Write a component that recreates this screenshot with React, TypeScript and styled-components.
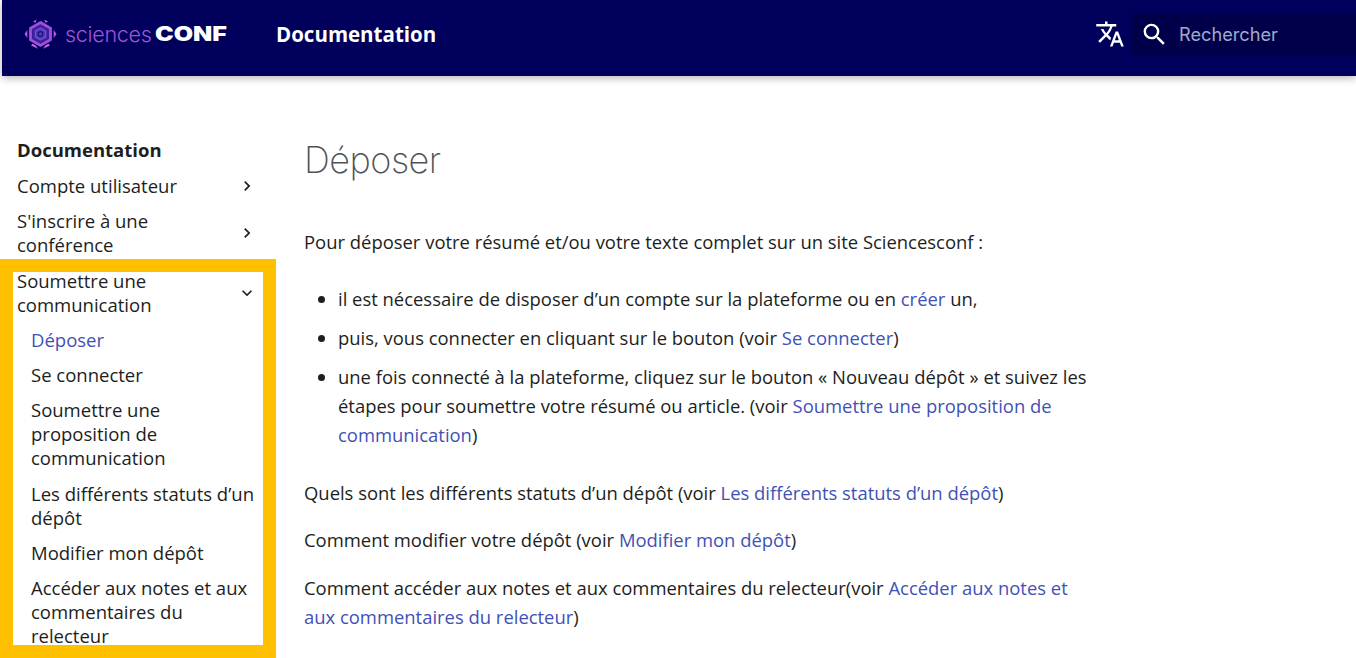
import styled, { createGlobalStyle } from "styled-components";
import { MdChevronRight, MdExpandMore, MdSearch, MdTranslate } from "react-icons/md";

const GlobalStyle = createGlobalStyle`
  html, body {
    margin: 0;
    background: #fff;
    overflow: hidden;
  }
  body {
    font-family: "Open Sans", "Liberation Sans", sans-serif;
    color: #1c1e21;
  }
`;

const subItems = [
  { label: "Déposer", active: true },
  { label: "Se connecter" },
  { label: "Soumettre une proposition de communication" },
  { label: "Les différents statuts d’un dépôt" },
  { label: "Modifier mon dépôt" },
  { label: "Accéder aux notes et aux commentaires du relecteur" },
];

const Logo = () => (
  <svg width="33" height="32" viewBox="0 0 33 32" fill="none">
    <path d="M16.500 4.500l10 5.750v11.500l-10 5.750-10-5.750v-11.500z" fill="#3a1f9a" stroke="#a04fd8" strokeWidth="2.800" />
    <path d="M16.500 10l5.200 3v6l-5.200 3-5.200-3v-6z" fill="#4b3cc0" stroke="#7a48d0" strokeWidth="1.400" />
    <circle cx="16.500" cy="16" r="2.400" stroke="#20106a" strokeWidth="1.200" />
    <path d="M9 3.800L12.500 1.500l-1 3.200zM24 3.800L20.500 1.500l1 3.200z" fill="#d060e0" />
    <path d="M7 27.500l7 3.200-2.500-3.400-3-1.600zM26 27.500l-7 3.200 2.500-3.400 3-1.600z" fill="#d060e0" />
    <path d="M3.300 12L0.500 16l2.800 4z" fill="#b45ce0" />
    <path d="M29.700 12L32.500 16l-2.800 4z" fill="#b45ce0" />
  </svg>
);

export default function App() {
  return (
    <Page>
      <GlobalStyle />
      <Header>
        <Brand>
          <Logo />
          <BrandLight>sciences</BrandLight>
          <BrandBold>CONF</BrandBold>
        </Brand>
        <HeaderTitle>Documentation</HeaderTitle>
        <HeaderRight>
          <MdTranslate size={30} color="#fff" />
          <SearchBox>
            <MdSearch size={29} color="#fff" />
            <SearchText>Rechercher</SearchText>
          </SearchBox>
        </HeaderRight>
      </Header>
      <Body>
        <Sidebar>
          <SideHeading>Documentation</SideHeading>
          <SideRow>
            <span>Compte utilisateur</span>
            <MdChevronRight size={20} />
          </SideRow>
          <SideRow>
            <span>S'inscrire à une conférence</span>
            <MdChevronRight size={20} />
          </SideRow>
          <SideRow>
            <span>Soumettre une communication</span>
            <MdExpandMore size={20} />
          </SideRow>
          <SubList>
            {subItems.map((item) => (
              <SubItem key={item.label} $active={item.active}>
                {item.label}
              </SubItem>
            ))}
          </SubList>
        </Sidebar>
        <Main>
          <Title>Déposer</Title>
          <Para>Pour déposer votre résumé et/ou votre texte complet sur un site Sciencesconf :</Para>
          <List>
            <li>
              il est nécessaire de disposer d’un compte sur la plateforme ou en <Link>créer</Link> un,
            </li>
            <li>
              puis, vous connecter en cliquant sur le bouton (voir <Link>Se connecter</Link>)
            </li>
            <li>
              une fois connecté à la plateforme, cliquez sur le bouton « Nouveau dépôt » et suivez les étapes pour
              soumettre votre résumé ou article. (voir <Link>Soumettre une proposition de communication</Link>)
            </li>
          </List>
          <Para>
            Quels sont les différents statuts d’un dépôt (voir <Link>Les différents statuts d’un dépôt</Link>)
          </Para>
          <Para>
            Comment modifier votre dépôt (voir <Link>Modifier mon dépôt</Link>)
          </Para>
          <Para>
            Comment accéder aux notes et aux commentaires du relecteur(voir{" "}
            <Link>Accéder aux notes et aux commentaires du relecteur</Link>)
          </Para>
        </Main>
      </Body>
      <Highlight />
    </Page>
  );
}

const Page = styled.div`
  position: relative;
  width: 1356px;
  height: 658px;
  overflow: hidden;
`;

const Header = styled.header`
  display: flex;
  align-items: center;
  height: 76px;
  margin-left: 2px;
  padding: 0 0 8px 22px;
  box-sizing: border-box;
  background: #00005c;
  box-shadow: 0 2px 8px rgba(0, 0, 0, 0.3);
`;

const Brand = styled.div`
  display: flex;
  align-items: center;
  width: 252px;
  flex-shrink: 0;
`;

const BrandLight = styled.span`
  margin-left: 8px;
  font-family: Inter, sans-serif;
  font-size: 21.500px;
  font-weight: 300;
  letter-spacing: -0.3px;
  color: #a055d8;
`;

const BrandBold = styled.span`
  display: inline-block;
  margin-left: 4px;
  font-family: Inter, sans-serif;
  font-size: 20px;
  font-weight: 900;
  color: #fff;
  transform: scaleX(1.25);
  transform-origin: left center;
`;

const HeaderTitle = styled.div`
  font-size: 20.500px;
  font-weight: 700;
  color: #fff;
`;

const HeaderRight = styled.div`
  display: flex;
  align-items: center;
  margin-left: auto;
  gap: 6px;
`;

const SearchBox = styled.div`
  display: flex;
  align-items: center;
  gap: 10px;
  width: 225px;
  height: 41px;
  padding-left: 9px;
  box-sizing: border-box;
  background: #00004a;
`;

const SearchText = styled.span`
  font-family: Inter, sans-serif;
  font-size: 18.200px;
  color: #a4a8c8;
`;

const Body = styled.div`
  display: flex;
`;

const Sidebar = styled.nav`
  width: 240px;
  flex-shrink: 0;
  margin: 62px 0 0 17px;
  font-size: 18.500px;
  line-height: 24px;
  color: #1c1e21;
`;

const SideHeading = styled.div`
  font-weight: 700;
  margin-bottom: 11.500px;
`;

const SideRow = styled.div`
  display: flex;
  align-items: center;
  justify-content: space-between;
  margin-bottom: 11.500px;

  span {
    max-width: 180px;
  }
`;

const SubList = styled.ul`
  list-style: none;
  margin: 0;
  padding: 0 0 0 14px;
`;

const SubItem = styled.li<{ $active?: boolean }>`
  margin-bottom: 11.200px;
  color: ${(p) => (p.$active ? "#3f51b5" : "#1c1e21")};
`;

const Main = styled.main`
  width: 790px;
  margin: 54px 0 0 47px;
  font-size: 18.430px;
  line-height: 29px;
  color: #1c1e21;
`;

const Title = styled.h1`
  margin: 0 0 37px;
  font-family: Inter, sans-serif;
  font-size: 36px;
  font-weight: 200;
  letter-spacing: -0.5px;
  line-height: 60px;
  color: #4f5358;
`;

const Para = styled.p`
  margin: 0 0 18.500px;
`;

const List = styled.ul`
  margin: 28px 0 29px;
  padding: 0 0 0 34px;

  li {
    margin-bottom: 9.800px;
  }
`;

const Link = styled.span`
  color: #3f51b5;
`;

// annotation frame laid over the screenshot
const Highlight = styled.div`
  position: absolute;
  left: 0;
  top: 259px;
  width: 276px;
  height: 399px;
  box-sizing: border-box;
  border: 13px solid #ffc000;
  pointer-events: none;
`;
